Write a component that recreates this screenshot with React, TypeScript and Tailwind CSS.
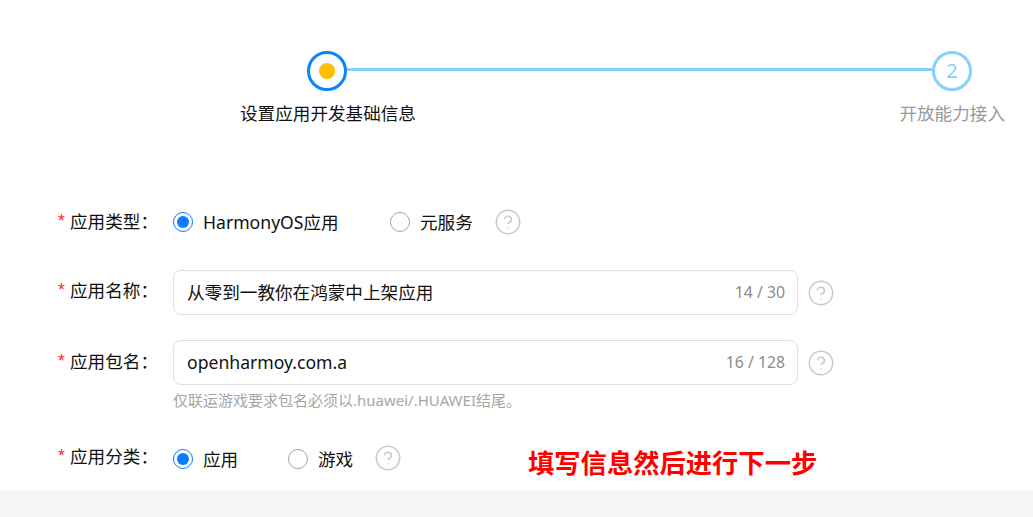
import React from 'react';
import { CircleHelp } from 'lucide-react';

const font = 'font-["Noto_Sans","Noto_Sans_CJK_SC",sans-serif]';

const Label: React.FC<{ text: string; offset: string }> = ({ text, offset }) => (
  <div className={`w-[173px] shrink-0 pl-[58px] flex text-[17.6px] leading-[24px] text-[#111111] ${offset}`}>
    <span className="w-[12px] text-[#fa2a2d] font-['Liberation_Sans',sans-serif]">*</span>
    <span>{text}：</span>
  </div>
);

const Radio: React.FC<{ label: string; checked?: boolean; width: string }> = ({ label, checked, width }) => (
  <div className={`flex items-center gap-[10px] ${width}`}>
    {checked ? (
      <span className="w-[20px] h-[20px] rounded-full border border-[#0a7cff] flex items-center justify-center">
        <span className="w-[12px] h-[12px] rounded-full bg-[#0a7cff]" />
      </span>
    ) : (
      <span className="w-[20px] h-[20px] rounded-full border border-[#a3a3a3]" />
    )}
    <span className="text-[17.6px] leading-[24px] text-[#111111]">{label}</span>
  </div>
);

const Help = () => <CircleHelp size={28} strokeWidth={1.25} className="text-[#c8c8c8] shrink-0" />;

const TextField: React.FC<{ value: string; count: string }> = ({ value, count }) => (
  <div className="w-[625px] h-[45px] rounded-[8px] border border-[#dcdee8] pl-[13px] pr-[12px] flex items-center justify-between">
    <span className="text-[17.6px] text-[#111111]">{value}</span>
    <span className="text-[15.8px] text-[#8c8c8c]">{count}</span>
  </div>
);

export default function App() {
  return (
    <div className={`w-[1033px] h-[517px] overflow-hidden bg-white flex flex-col ${font}`}>
      <div className="pt-[51px]">
        <div className="ml-[307px] w-[665px] flex items-center">
          <div className="w-[40px] h-[40px] rounded-full border-[3px] border-[#0a84ff] flex items-center justify-center">
            <span className="w-[16px] h-[16px] rounded-full bg-[#ffbf00]" />
          </div>
          <div className="flex-1 h-[3px] mb-[3px] bg-[#86d0ff]" />
          <div className="w-[40px] h-[40px] rounded-full border-[3px] border-[#86d0ff] flex items-center justify-center text-[20px] text-[#86d0ff]">
            2
          </div>
        </div>
        <div className="ml-[240px] w-[765px] mt-[10px] flex justify-between text-[17.6px] leading-[24px]">
          <span className="text-[#111111]">设置应用开发基础信息</span>
          <span className="text-[#999999]">开放能力接入</span>
        </div>
      </div>

      <div className="mt-[83px] flex h-[28px]">
        <Label text="应用类型" offset="pt-[1px]" />
        <div className="flex items-center h-[28px]">
          <Radio label="HarmonyOS应用" checked width="w-[217px]" />
          <Radio label="元服务" width="w-[104px]" />
          <Help />
        </div>
      </div>

      <div className="mt-[34px] flex">
        <Label text="应用名称" offset="pt-[8px]" />
        <TextField value="从零到一教你在鸿蒙中上架应用" count="14 / 30" />
        <div className="ml-[9px] h-[45px] flex items-center"><Help /></div>
      </div>

      <div className="mt-[25px] flex">
        <Label text="应用包名" offset="pt-[9px]" />
        <div>
          <TextField value="openharmoy.com.a" count="16 / 128" />
          <p className="mt-[5px] text-[15px] leading-[20px] text-[#a6a6a6]">仅联运游戏要求包名必须以.huawei/.HUAWEI结尾。</p>
        </div>
        <div className="ml-[9px] h-[45px] flex items-center"><Help /></div>
      </div>

      <div className="mt-[35px] flex items-start">
        <Label text="应用分类" offset="-mt-[1px]" />
        <div className="flex items-center h-[28px]">
          <Radio label="应用" checked width="w-[115px]" />
          <Radio label="游戏" width="w-[86px]" />
          <div className="-mt-[2px]"><Help /></div>
        </div>
        <div className="ml-[126px] mt-[2px] text-[26.3px] leading-[32px] font-bold text-[#ff0000]">填写信息然后进行下一步</div>
      </div>

      <div className="mt-auto h-[26px] bg-[#f5f5f5]" />
    </div>
  );
}
